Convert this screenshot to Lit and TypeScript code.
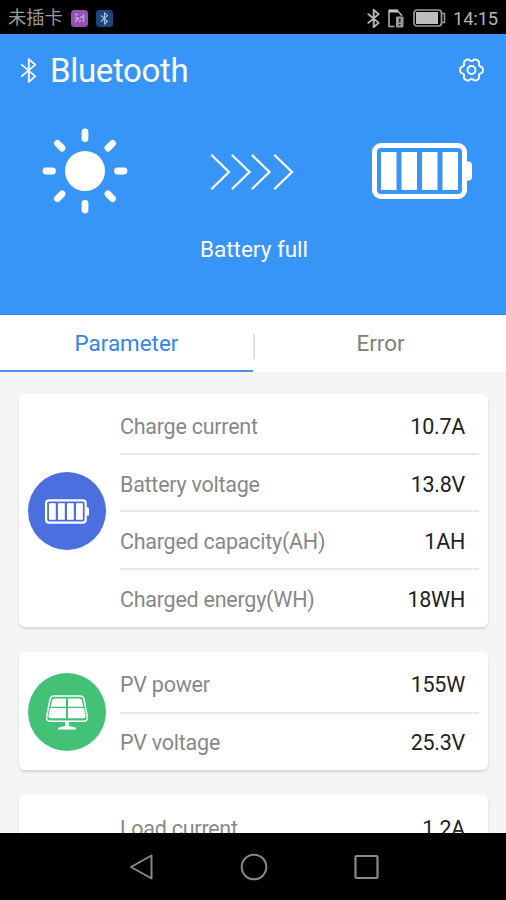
import { LitElement, html, css, svg } from "lit";
import { customElement, property } from "lit/decorators.js";

interface Reading {
  label: string;
  value: string;
}

const batteryReadings: Reading[] = [
  { label: "Charge current", value: "10.7A" },
  { label: "Battery voltage", value: "13.8V" },
  { label: "Charged capacity(AH)", value: "1AH" },
  { label: "Charged energy(WH)", value: "18WH" },
];

const solarReadings: Reading[] = [
  { label: "PV power", value: "155W" },
  { label: "PV voltage", value: "25.3V" },
];

const loadReadings: Reading[] = [{ label: "Load current", value: "1.2A" }];

const gearPath = (): string => {
  const points: string[] = [];
  for (let i = 0; i < 72; i++) {
    const a = (i / 72) * Math.PI * 2;
    const r = 10.4 + 1.3 * Math.cos(6 * a) - 0.3 * Math.cos(12 * a);
    points.push(`${(13 + r * Math.cos(a)).toFixed(2)} ${(13 + r * Math.sin(a)).toFixed(2)}`);
  }
  return `M${points.join("L")}Z`;
};

const bluetoothGlyph = svg`<path d="M1.5 6.5 L13 17.5 L7.5 23 V1 L13 6.5 L1.5 17.5" fill="none" stroke="currentColor" stroke-linejoin="round" stroke-linecap="round"/>`;

const batteryGlyph = svg`
  <rect x="2.5" y="2.5" width="90" height="51" rx="6.5" fill="none" stroke="#fff" stroke-width="5"/>
  <path d="M94 18.5h2.5q3.5 0 3.5 3.5v12q0 3.500-3.500 3.500H94z" fill="#fff"/>
  <path d="M9 9h15.500v38H9zM29.500 9H45v38H29.500zM50 9h15.500v38H50zM70.500 9H86v38H70.500z" fill="#fff"/>`;

@customElement("status-bar")
class StatusBar extends LitElement {
  static styles = css`
    :host {
      display: flex;
      align-items: center;
      height: 34px;
      box-sizing: border-box;
      padding: 2px 8px 0;
      background: #000;
      color: #b4b4b4;
      font-size: 18.3px;
    }
    .carrier {
      font-family: Roboto, "Noto Sans CJK SC", sans-serif;
      margin-right: 9px;
      color: #999;
      line-height: 20px;
      width: 54px;
      white-space: nowrap;
    }
    .badge {
      display: block;
      margin-right: 8px;
    }
    .spacer {
      flex: 1;
    }
    .bt { margin-right: 8px; }
    .sim { margin-right: 9px; }
    .power { margin-right: 7px; }
    .clock { letter-spacing: -0.1px; }
    svg { display: block; }
  `;
  render() {
    return html`
      <span class="carrier">未插卡</span>
      <svg class="badge" width="17" height="17" viewBox="0 0 17 17">
        <rect width="17" height="17" rx="3.500" fill="#9155af" />
        <path d="M4 4.500h3M4 12l4-4M9 7h4M12.500 4v8M4 8h3M10 10l-2 2" stroke="#cf9be2" stroke-width="1.300" fill="none" />
      </svg>
      <svg class="badge" width="17" height="17" viewBox="0 0 17 17">
        <rect width="17" height="17" rx="3.500" fill="#1d467d" />
        <path d="M5 5.500l6.500 6L8.500 14V3l3 2.500-6.500 6" stroke="#a8bcd6" stroke-width="1.100" fill="none" />
      </svg>
      <span class="spacer"></span>
      <svg class="bt" width="13" height="19" viewBox="0 0 14.500 24" preserveAspectRatio="none" stroke-width="2.200">${bluetoothGlyph}</svg>
      <svg class="sim" width="16" height="19" viewBox="0 0 16 19">
        <path d="M6.500 17.500H1V1.500h8L13.500 6v1" fill="none" stroke="#b4b4b4" stroke-width="1.500" />
        <path d="M1 2h9" stroke="#c4c4c4" stroke-width="3" />
        <rect x="8" y="7.500" width="7.500" height="11" rx="1" fill="#999" />
        <path d="M11.700 9.500v4M11.700 15v1.800" stroke="#222" stroke-width="1.500" />
      </svg>
      <svg class="power" width="33" height="18" viewBox="0 0 33 18">
        <rect x="1" y="1" width="27.500" height="16" rx="3" fill="none" stroke="#999" stroke-width="1.700" />
        <rect x="3" y="3" width="22" height="12" fill="#bebebe" />
        <path d="M29 4.500h2.500v9H29" fill="none" stroke="#999" stroke-width="1.500" />
      </svg>
      <span class="clock">14:15</span>
    `;
  }
}

@customElement("energy-flow")
class EnergyFlow extends LitElement {
  static styles = css`
    :host {
      display: block;
      height: 281px;
      box-sizing: border-box;
      background: #3795f7;
      border-bottom: 1px solid #1f87ee;
      color: #fff;
    }
    svg { display: block; }
    .title-row {
      display: flex;
      align-items: center;
      height: 72px;
      padding: 0 21px 0 20px;
    }
    .title {
      flex: 1;
      margin-left: 13px;
      font-size: 33px;
      letter-spacing: -0.35px;
      padding-top: 1px;
    }
    .flow {
      display: grid;
      grid-template-columns: 86px 84px 100px;
      justify-content: space-between;
      align-items: center;
      height: 86px;
      margin: 22px 34px 0 42px;
    }
    .arrows {
      margin: 2px 0 0 2px;
    }
    .state {
      margin-top: 20px;
      height: 30px;
      line-height: 30px;
      text-align: center;
      font-size: 22.500px;
      padding-left: 2px;
    }
  `;
  render() {
    return html`
      <div class="title-row">
        <svg width="17" height="25" viewBox="0 0 14.500 24" preserveAspectRatio="none" stroke-width="1.600">${bluetoothGlyph}</svg>
        <span class="title">Bluetooth</span>
        <svg width="27" height="26" viewBox="0 0 26 26">
          <path d=${gearPath()} fill="none" stroke="#fff" stroke-width="1.900" stroke-linejoin="round" />
          <circle cx="13" cy="13" r="4" fill="none" stroke="#fff" stroke-width="1.900" />
        </svg>
      </div>
      <div class="flow">
        <svg width="86" height="86" viewBox="-43 -43 86 86">
          <circle r="20" fill="#fff" />
          ${[0, 45, 90, 135, 180, 225, 270, 315].map(
            (a) => svg`<path d="M32.500 0H39" transform="rotate(${a})" stroke="#fff" stroke-width="6.800" stroke-linecap="round"/>`,
          )}
        </svg>
        <svg class="arrows" width="84" height="36" viewBox="0 0 84 36">
          <path d="M2 1.500L19 18L2 34.500M22.500 1.500L39.500 18L22.500 34.500M42.500 1.500L59.500 18L42.500 34.500M65 1.500L82 18L65 34.500" fill="none" stroke="#fff" stroke-width="2.200" stroke-linecap="round" />
        </svg>
        <svg width="100" height="56" viewBox="0 0 100 56">${batteryGlyph}</svg>
      </div>
      <div class="state">Battery full</div>
    `;
  }
}

@customElement("view-tabs")
class ViewTabs extends LitElement {
  static styles = css`
    :host {
      display: grid;
      grid-template-columns: 1fr 1fr;
      height: 57px;
      background: #fff;
      font-size: 22.4px;
    }
    .tab {
      display: flex;
      align-items: center;
      justify-content: center;
      color: #808080;
      box-sizing: border-box;
      border-bottom: 2px solid transparent;
      padding-top: 1px;
    }
    .tab.active {
      color: #3284ee;
      border-bottom-color: #4a90e8;
    }
    .divider {
      width: 2px;
      height: 25px;
      margin: 6px auto 0 0;
      background: #e0e0e0;
    }
    .label {
      margin-right: auto;
    }
  `;
  render() {
    return html`
      <div class="tab active">Parameter</div>
      <div class="tab"><span class="divider"></span><span class="label">Error</span></div>
    `;
  }
}

@customElement("reading-card")
class ReadingCard extends LitElement {
  @property({ attribute: false }) readings: Reading[] = [];
  @property({ reflect: true }) kind = "";

  static styles = css`
    :host {
      display: grid;
      grid-template-columns: 101px 1fr;
      box-sizing: border-box;
      background: #fff;
      border-radius: 6px;
      box-shadow: 0 2px 3px rgba(0, 0, 0, 0.13);
      padding-right: 9px;
      flex: none;
    }
    :host([kind="battery"]) { height: 233px; }
    :host([kind="solar"]) { height: 118px; }
    .icon-cell {
      display: flex;
      align-items: center;
      padding: 1px 0 0 9px;
    }
    .rows { padding-top: 4px; }
    :host([kind="battery"]) .rows { padding-top: 3px; }
    :host([kind="battery"]) .row { padding-top: 4px; }
    :host([kind="load"]) .rows { padding-top: 5px; }
    .disc {
      display: flex;
      align-items: center;
      justify-content: center;
      width: 78px;
      height: 78px;
      border-radius: 50%;
    }
    .disc.battery { background: #4c6fdf; }
    .disc.solar { background: #43c277; }
    .row {
      display: flex;
      align-items: center;
      justify-content: space-between;
      box-sizing: border-box;
      height: 57.600px;
      padding: 2px 14px 0 0;
      font-size: 21.500px;
      letter-spacing: -0.25px;
      border-bottom: 2px solid #e8e8e8;
    }
    .row:last-child { border-bottom-color: transparent; }
    .label { color: #888; }
    .value { color: #222; }
  `;

  private icon() {
    if (this.kind === "battery") {
      return html`<svg width="44" height="25" viewBox="0 0 100 56">${batteryGlyph}</svg>`;
    }
    if (this.kind === "solar") {
      return html`<svg width="44" height="35" viewBox="0 0 44 34" preserveAspectRatio="none">
        <path d="M9 1h26q3.200 0 3.900 3l3.400 17q.7 4.500-3.500 4.500H5.200Q1 25.500 1.700 21L5.100 4Q5.800 1 9 1z" fill="none" stroke="#fff" stroke-width="1.500" />
        <path d="M9.500 3.300H21v8H5.800l1.500-6.500q.4-1.500 2.200-1.500zM23 3.300h11.500q1.800 0 2.200 1.500l1.500 6.500H23zM5.200 12.700H21v10H6q-3 0-2.500-2.700zM23 12.700h15.800l1.700 7.300q.5 2.700-2.500 2.700H23z" fill="#fff" />
        <path d="M20.200 25h3.600v5l7.200 1.700v1.800H13v-1.800l7.200-1.700z" fill="#fff" />
      </svg>`;
    }
    return "";
  }

  render() {
    return html`
      <div class="icon-cell"><div class="disc ${this.kind}">${this.icon()}</div></div>
      <div class="rows">
        ${this.readings.map(
          (r) => html`<div class="row"><span class="label">${r.label}</span><span class="value">${r.value}</span></div>`,
        )}
      </div>
    `;
  }
}

@customElement("nav-bar")
class NavBar extends LitElement {
  static styles = css`
    :host {
      display: flex;
      align-items: center;
      justify-content: center;
      gap: 86px;
      height: 67px;
      box-sizing: border-box;
      padding-left: 1px;
      background: #000;
    }
    svg { display: block; }
  `;
  render() {
    return html`
      <svg width="26" height="28" viewBox="0 0 26 28"><path d="M3 14L23.500 2.500V25.500Z" fill="none" stroke="#888" stroke-width="2" stroke-linejoin="round" /></svg>
      <svg width="28" height="28" viewBox="0 0 28 28"><circle cx="14" cy="14" r="12.300" fill="none" stroke="#888" stroke-width="2" /></svg>
      <svg width="26" height="28" viewBox="0 0 26 28"><rect x="1.500" y="3" width="22" height="22" rx="1" fill="none" stroke="#888" stroke-width="2.200" /></svg>
    `;
  }
}

@customElement("app-root")
class AppRoot extends LitElement {
  static styles = css`
    :host {
      display: flex;
      flex-direction: column;
      height: 900px;
      overflow: hidden;
      font-family: Roboto, "Noto Sans CJK SC", sans-serif;
      background: #f5f5f5;
    }
    .readings {
      flex: 1;
      min-height: 0;
      overflow: hidden;
      display: flex;
      flex-direction: column;
      gap: 25px;
      padding: 22px 18px 0 19px;
    }
  `;
  render() {
    return html`
      <status-bar></status-bar>
      <energy-flow></energy-flow>
      <view-tabs></view-tabs>
      <main class="readings">
        <reading-card kind="battery" .readings=${batteryReadings}></reading-card>
        <reading-card kind="solar" .readings=${solarReadings}></reading-card>
        <reading-card kind="load" .readings=${loadReadings}></reading-card>
      </main>
      <nav-bar></nav-bar>
    `;
  }
}
